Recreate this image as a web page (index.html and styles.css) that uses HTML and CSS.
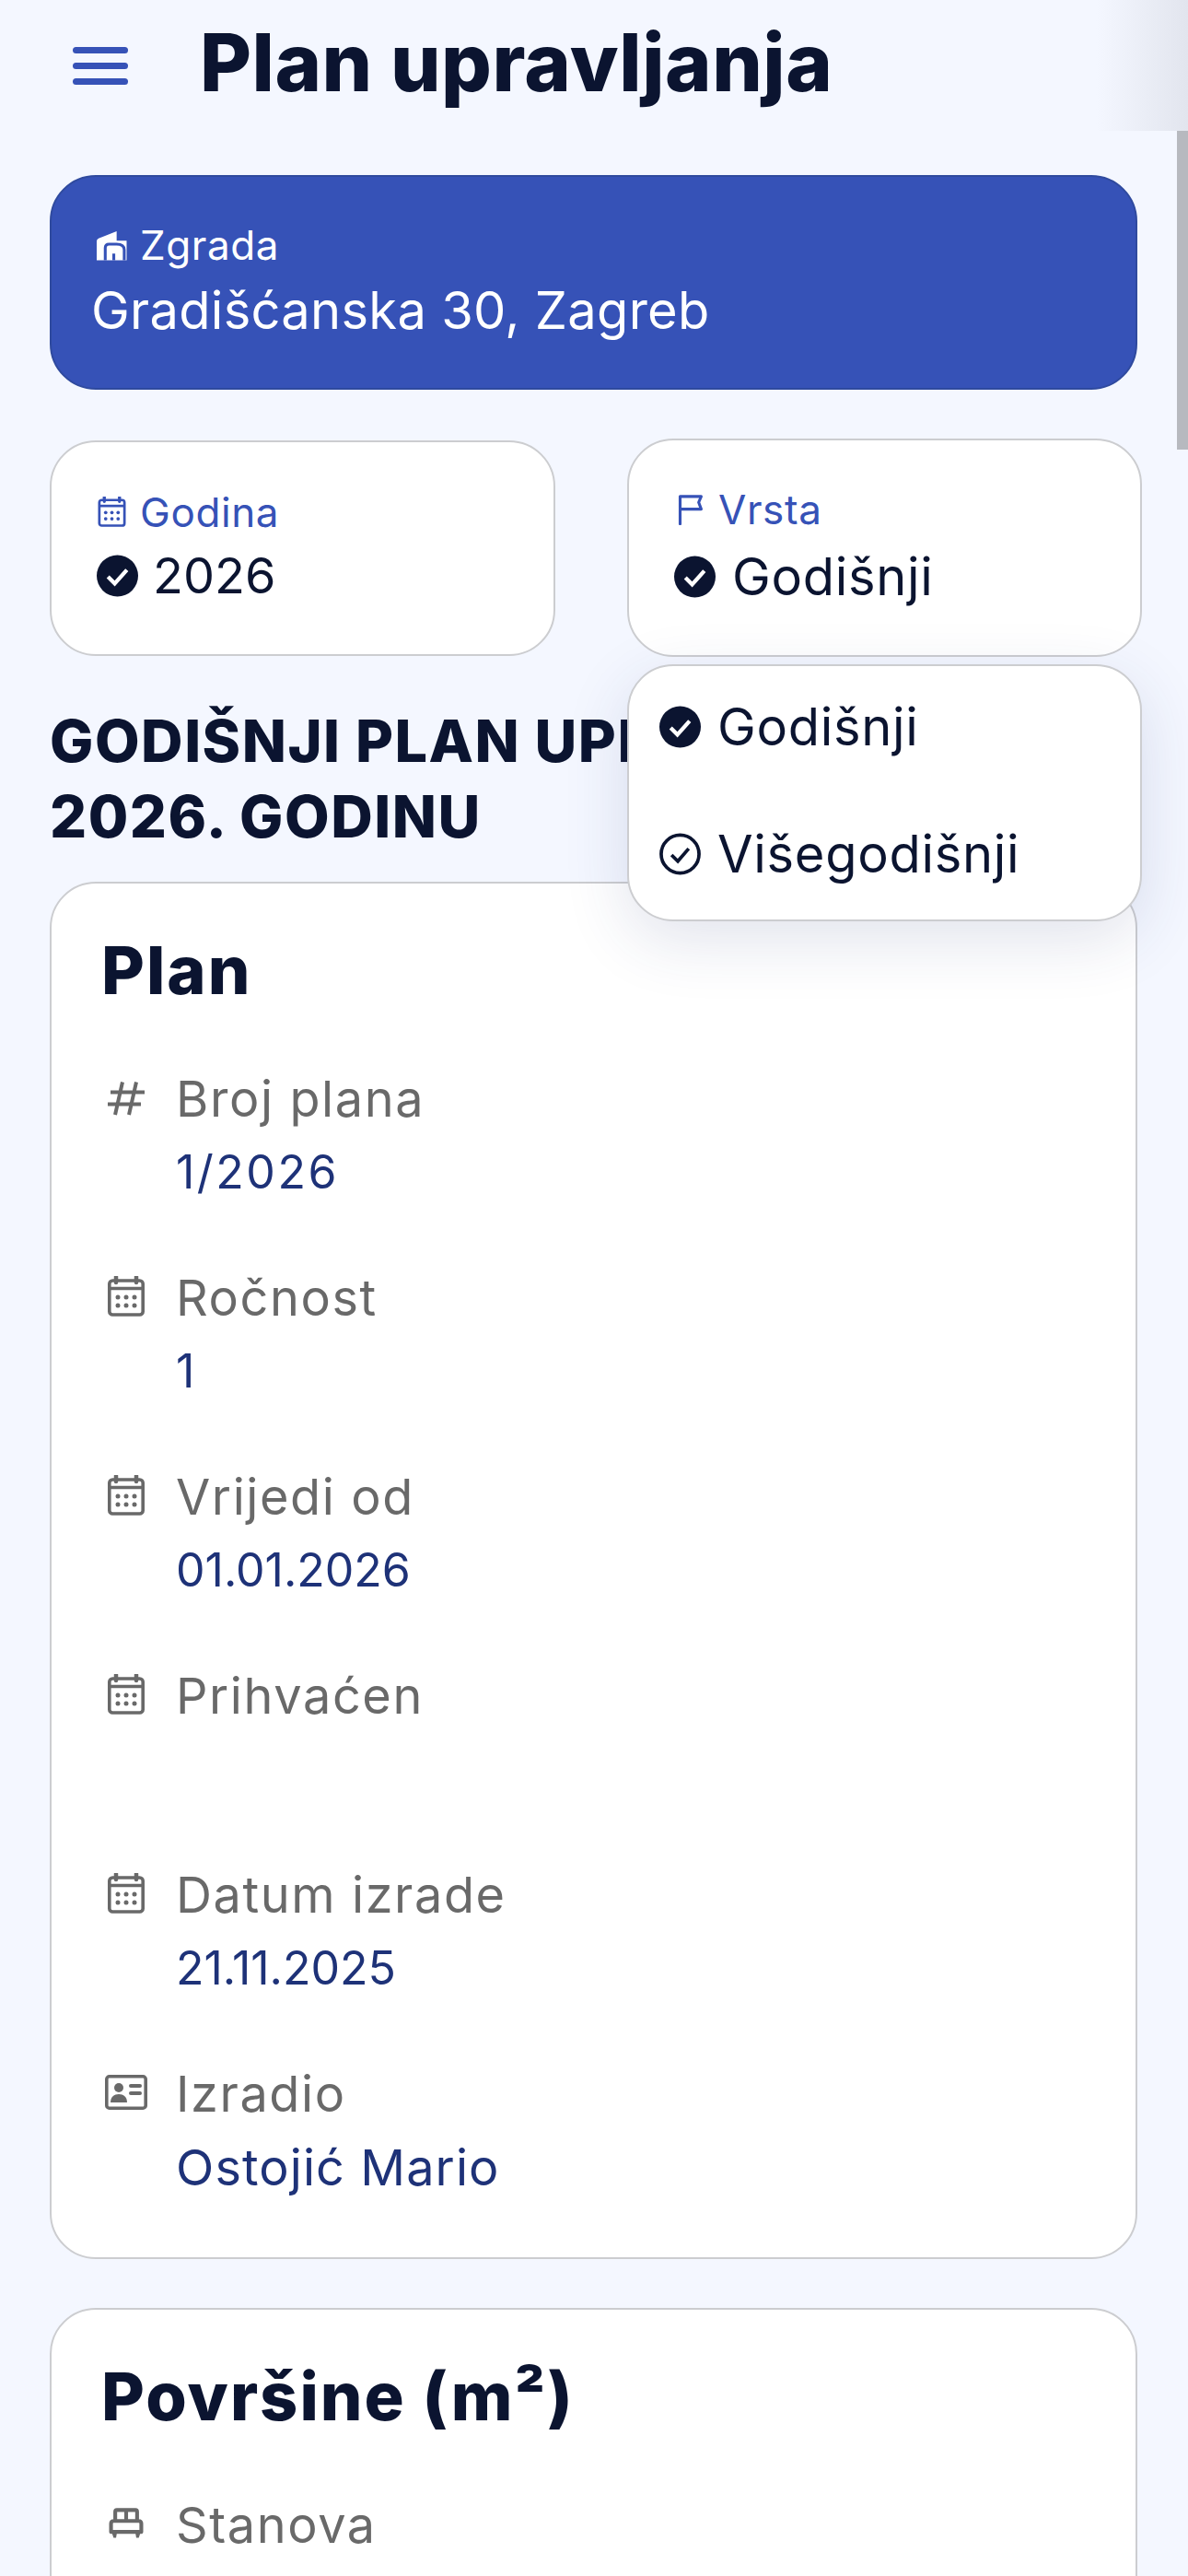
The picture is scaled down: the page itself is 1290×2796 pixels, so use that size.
FILE: index.html
```html
<!DOCTYPE html>
<html lang="hr">
<head>
  <meta charset="UTF-8">
  <title>Plan upravljanja</title>
  <link rel="stylesheet" href="styles.css">
</head>
<body>
  <svg class="defs" width="0" height="0">
    <symbol id="calendar" viewBox="0 0 40 44">
      <path d="M9 1v6M31 1v6" fill="none" stroke="currentColor" stroke-width="4.500" stroke-linecap="round"/>
      <rect x="1.800" y="5" width="36.400" height="37" rx="3.500" fill="none" stroke="currentColor" stroke-width="3.600"/>
      <path d="M2 13.500h36" stroke="currentColor" stroke-width="3.600"/>
      <g fill="currentColor">
        <circle cx="11" cy="23" r="2.500"/><circle cx="20" cy="23" r="2.500"/><circle cx="29" cy="23" r="2.500"/>
        <circle cx="11" cy="32" r="2.500"/><circle cx="20" cy="32" r="2.500"/><circle cx="29" cy="32" r="2.500"/>
      </g>
    </symbol>
    <symbol id="check-solid" viewBox="0 0 46 46">
      <circle cx="23" cy="23" r="23" fill="currentColor"/>
      <path d="M12.500 24l7.500 7.500 13.500-15" fill="none" stroke="#fff" stroke-width="4.400"/>
    </symbol>
    <symbol id="check-line" viewBox="0 0 46 46">
      <circle cx="23" cy="23" r="21" fill="none" stroke="currentColor" stroke-width="3.800"/>
      <path d="M13.500 24l7 7 12-14" fill="none" stroke="currentColor" stroke-width="3.800"/>
    </symbol>
  </svg>

  <header class="topbar">
    <button class="menuBtn" type="button"><span></span><span></span><span></span></button>
    <h1>Plan upravljanja</h1>
  </header>
  <div class="topbarFade"></div>
  <div class="scrollThumb"></div>

  <main class="content">
    <section class="buildingCard">
      <div class="pickerLabel">
        <svg class="pickerIcon" viewBox="0 0 32 31">
          <path fill="currentColor" d="M0 31V11q0-2 2-3L21 .5v10h10.500V31z"/>
          <path fill="none" stroke="#3652B7" stroke-width="3" d="M9 31V18q0-4 4-4h8q8 0 8 6v11M18 31v-7"/>
        </svg>
        <span>Zgrada</span>
      </div>
      <div class="buildingName">Gradišćanska 30, Zagreb</div>
    </section>

    <section class="pickers">
      <div class="picker pickerYear">
        <div class="pickerLabel">
          <svg class="pickerIcon"><use href="#calendar"/></svg>
          <span>Godina</span>
        </div>
        <div class="pickerValue">
          <svg class="checkIcon"><use href="#check-solid"/></svg>
          <span>2026</span>
        </div>
      </div>

      <div class="picker pickerType">
        <div class="pickerLabel">
          <svg class="pickerIcon flagIcon" viewBox="0 0 28 36"><path fill="none" stroke="currentColor" stroke-width="3.400" stroke-linecap="round" stroke-linejoin="round" d="M2 34.500V2h25l-3 7 3 8H2"/></svg>
          <span>Vrsta</span>
        </div>
        <div class="pickerValue">
          <svg class="checkIcon"><use href="#check-solid"/></svg>
          <span class="wideText">Godišnji</span>
        </div>
        <ul class="dropdown">
          <li>
            <svg class="checkIcon"><use href="#check-solid"/></svg>
            <span class="wideText">Godišnji</span>
          </li>
          <li>
            <svg class="checkIcon"><use href="#check-line"/></svg>
            <span class="wideText">Višegodišnji</span>
          </li>
        </ul>
      </div>
    </section>

    <h2 class="planTitle">GODIŠNJI PLAN UPRAVLJANJA ZA<br>2026. GODINU</h2>

    <section class="card">
      <h3>Plan</h3>
      <div class="row">
        <svg class="rowIcon" viewBox="0 0 42 44"><path fill="none" stroke="currentColor" stroke-width="4" d="M17 5.500L9 41M32 5.500L24 41M4 16.500h37M1 29.500h36"/></svg>
        <div><div class="rowLabel">Broj plana</div><div class="rowValue rowValueCode">1/2026</div></div>
      </div>
      <div class="row">
        <svg class="rowIcon"><use href="#calendar"/></svg>
        <div><div class="rowLabel">Ročnost</div><div class="rowValue">1</div></div>
      </div>
      <div class="row">
        <svg class="rowIcon"><use href="#calendar"/></svg>
        <div><div class="rowLabel">Vrijedi od</div><div class="rowValue">01.01.2026</div></div>
      </div>
      <div class="row">
        <svg class="rowIcon"><use href="#calendar"/></svg>
        <div><div class="rowLabel">Prihvaćen</div><div class="rowValue"></div></div>
      </div>
      <div class="row">
        <svg class="rowIcon"><use href="#calendar"/></svg>
        <div><div class="rowLabel">Datum izrade</div><div class="rowValue">21.11.2025</div></div>
      </div>
      <div class="row">
        <svg class="rowIcon rowIconWide" viewBox="0 0 46 38">
          <rect x="1.800" y="1.800" width="42.400" height="34.400" rx="3" fill="none" stroke="currentColor" stroke-width="3.600"/>
          <circle cx="15" cy="14" r="5" fill="currentColor"/>
          <path fill="currentColor" d="M6 30c0-6 4-9 9-9s9 3 9 9z"/>
          <path d="M28 12h10M28 20h10" stroke="currentColor" stroke-width="4" stroke-linecap="round"/>
        </svg>
        <div><div class="rowLabel">Izradio</div><div class="rowValue rowValueName">Ostojić Mario</div></div>
      </div>
    </section>

    <section class="card">
      <h3>Površine (m²)</h3>
      <div class="row">
        <svg class="rowIcon" viewBox="-3 -4 46 44">
          <path fill="none" stroke="currentColor" stroke-width="4.500" stroke-linejoin="round" d="M7 15V4a2 2 0 0 1 2-2h22a2 2 0 0 1 2 2v11M20 2v13M5 15h30a3 3 0 0 1 3 3v10H2V18a3 3 0 0 1 3-3z"/>
          <path fill="currentColor" d="M3 29h6l-1 6H5zM31 29h6l-2 6h-3z"/>
        </svg>
        <div><div class="rowLabel">Stanova</div></div>
      </div>
    </section>
  </main>
</body>
</html>
```

FILE: styles.css
```css
html, body {
  margin: 0;
  padding: 0;
  height: 2796px;
  overflow: hidden;
}
body {
  position: relative;
  background-color: #F4F7FF;
  color: #0B1430;
  font-family: Inter, "Open Sans", "Liberation Sans", sans-serif;
}
.defs {
  position: absolute;
}
.topbar {
  display: flex;
  align-items: center;
  height: 142px;
  padding-left: 79px;
}
.topbar h1 {
  margin: 0 0 6px 78px;
  font-size: 86px;
  font-weight: 800;
  letter-spacing: 0.5px;
  white-space: nowrap;
}
.menuBtn {
  display: flex;
  flex-direction: column;
  gap: 10px;
  width: 60px;
  padding: 0;
  border: none;
  background: none;
}
.menuBtn span {
  height: 7px;
  border-radius: 4px;
  background-color: #3652B7;
}
.topbarFade {
  position: absolute;
  top: 0;
  right: 0;
  width: 100px;
  height: 142px;
  background: linear-gradient(to right, rgba(226, 229, 238, 0), #E2E5EE);
}
.scrollThumb {
  position: absolute;
  top: 142px;
  right: 0;
  width: 12px;
  height: 346px;
  background-color: #B7B9BF;
}
.content {
  box-sizing: border-box;
  width: 1290px;
  height: 2654px;
  padding: 48px 55px 0 54px;
  overflow: hidden;
}
.buildingCard {
  box-sizing: border-box;
  height: 233px;
  padding: 44px 43px;
  border: 2px solid #2F4A9E;
  border-radius: 50px;
  background-color: #3652B7;
  color: #fff;
}
.pickerLabel {
  display: flex;
  align-items: center;
  height: 60px;
  font-size: 44px;
  letter-spacing: 0.6px;
}
.pickerIcon {
  width: 33px;
  height: 33px;
  margin-right: 14px;
  flex: none;
}
.buildingCard .pickerLabel {
  margin-left: 6px;
}
.buildingName {
  font-size: 56px;
  letter-spacing: 0.3px;
  line-height: 76px;
  margin-top: 3px;
  white-space: nowrap;
}
.pickers {
  display: flex;
  align-items: center;
  gap: 78px;
  margin-top: 53px;
  width: 1186px;
}
.picker {
  box-sizing: border-box;
  padding-left: 49px;
  border: 2px solid #CCCDD0;
  border-radius: 50px;
  background-color: #fff;
}
.pickerYear {
  width: 549px;
  height: 234px;
  padding-top: 46px;
}
.pickerType {
  position: relative;
  width: 559px;
  height: 237px;
  padding-top: 45px;
}
.pickerYear .pickerLabel, .pickerType .pickerLabel {
  color: #3652B7;
}
.pickerType .pickerLabel {
  padding-left: 1px;
}
.flagIcon {
  margin-right: 14px;
}
.pickerValue {
  display: flex;
  align-items: center;
  height: 78px;
  font-size: 54px;
}
.pickerType .pickerValue {
  margin-top: 4px;
}
.checkIcon {
  width: 45px;
  height: 46px;
  margin-right: 18px;
  flex: none;
}
.pickerYear .checkIcon {
  margin-right: 16px;
}
.wideText {
  font-size: 56px;
  letter-spacing: 0.7px;
}
.dropdown {
  position: absolute;
  top: 243px;
  left: -2px;
  box-sizing: border-box;
  width: 559px;
  height: 279px;
  margin: 0;
  padding: 31px 0 0 33px;
  list-style: none;
  border: 2px solid #CCCDD0;
  border-radius: 50px;
  background-color: #fff;
  box-shadow: 0 20px 70px rgba(40, 55, 120, 0.14);
}
.dropdown li {
  display: flex;
  align-items: center;
  height: 70px;
  margin-bottom: 68px;
}
.planTitle {
  margin: 50px 0 30px;
  font-size: 63px;
  letter-spacing: 1.5px;
  line-height: 82px;
  font-weight: 800;
  white-space: nowrap;
}
.card {
  box-sizing: border-box;
  height: 1495px;
  margin-bottom: 53px;
  padding: 44px 54px 0;
  border: 2px solid #CCCDD0;
  border-radius: 50px;
  background-color: #fff;
}
.card h3 {
  margin: 0 0 50px;
  font-size: 72px;
  letter-spacing: 2px;
  line-height: 100px;
  font-weight: 800;
}
.row {
  display: flex;
  margin-bottom: 57px;
}
.rowIcon {
  width: 42px;
  height: 44px;
  margin: 16px 33px 0 6px;
  flex: none;
  color: #696969;
}
.rowIconWide {
  width: 46px;
  margin: 16px 31px 0 4px;
}
.rowLabel {
  min-height: 80px;
  line-height: 79px;
  font-size: 54px;
  letter-spacing: 1.6px;
  color: #696969;
}
.rowValue {
  min-height: 79px;
  line-height: 79px;
  font-size: 50px;
  color: #1E3278;
}
.rowValueCode {
  letter-spacing: 2.500px;
}
.rowValueName {
  font-size: 54px;
  letter-spacing: 1.1px;
}
```
